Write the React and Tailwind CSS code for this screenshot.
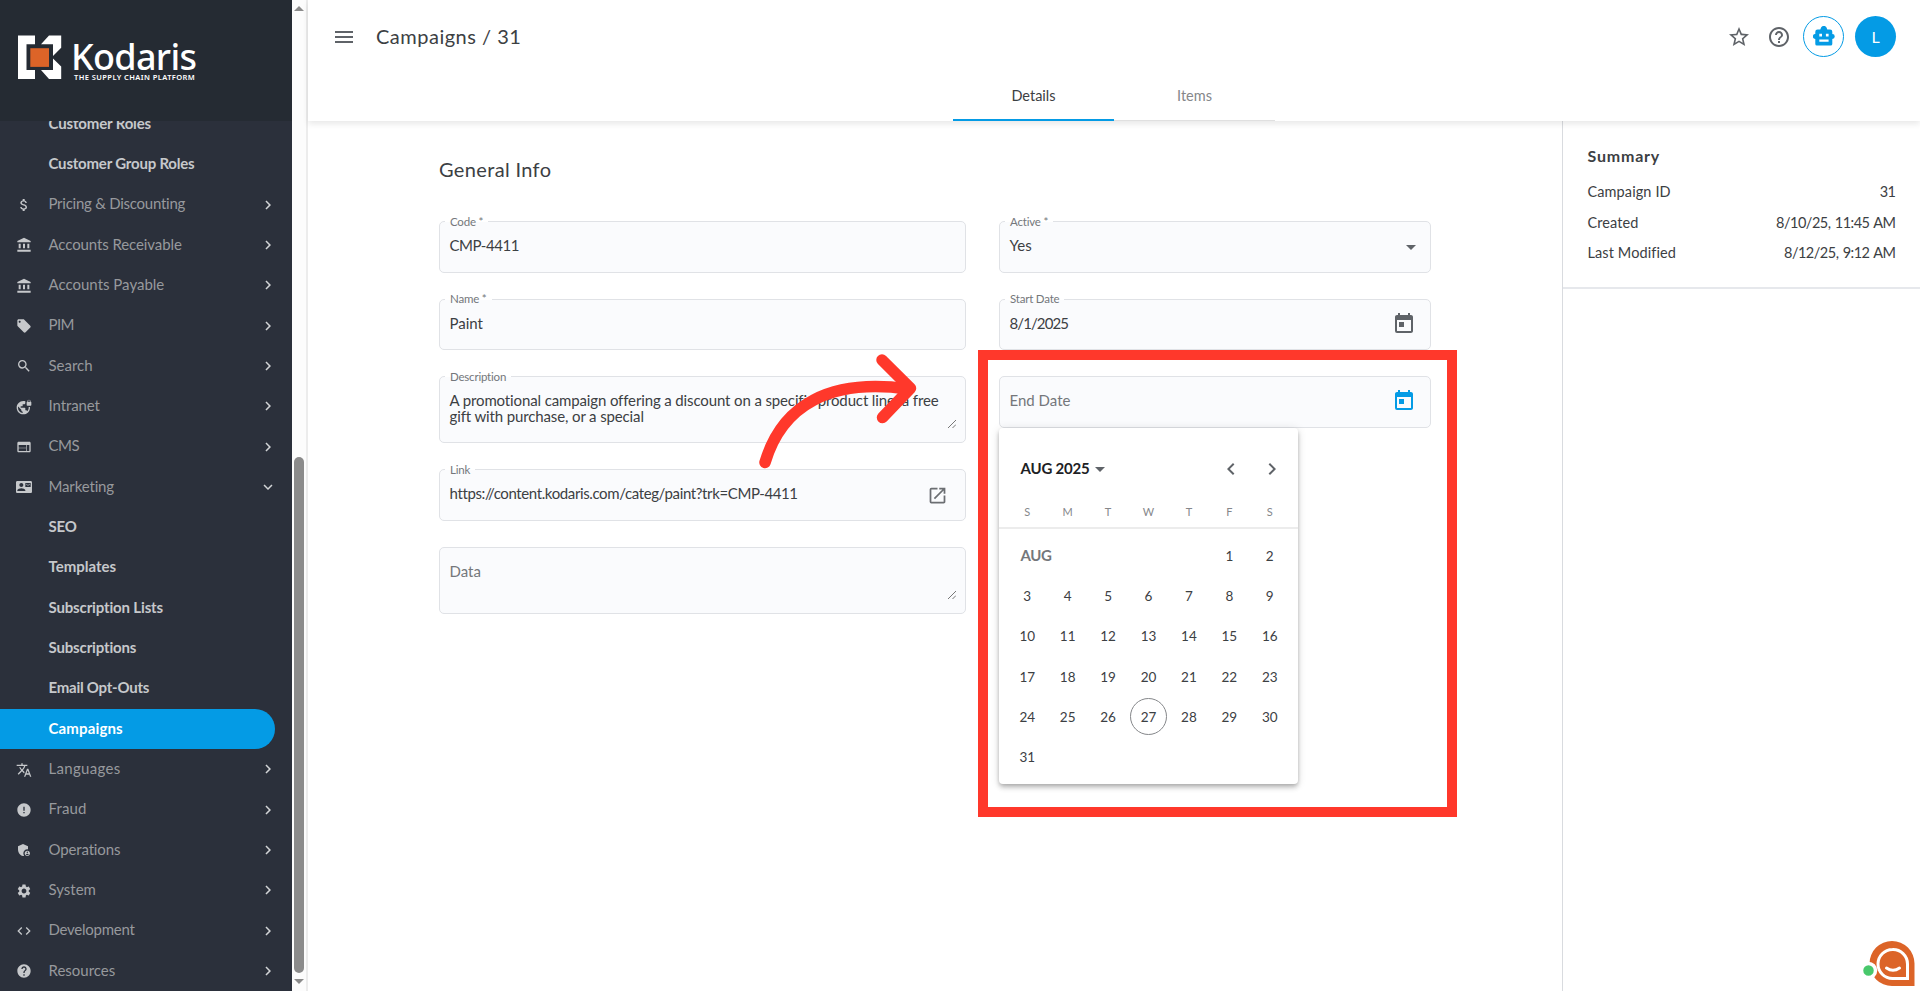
import React, { useState } from 'react';
import {
  MdAttachMoney, MdAccountBalance, MdLocalOffer, MdSearch, MdVpnLock, MdWeb, MdContactMail,
  MdTranslate, MdError, MdAdminPanelSettings, MdSettings, MdCode, MdHelp, MdChevronRight,
  MdChevronLeft, MdExpandMore, MdMenu, MdStarOutline, MdHelpOutline, MdToday,
  MdOpenInNew, MdArrowDropDown,
} from 'react-icons/md';

const menu = [
  { label: 'Customer Roles', child: true, tracking: 'tracking-[-0.15px]' },
  { label: 'Customer Group Roles', child: true, tracking: 'tracking-[-0.2px]' },
  { label: 'Pricing & Discounting', icon: MdAttachMoney, tracking: 'tracking-[-0.25px]' },
  { label: 'Accounts Receivable', icon: MdAccountBalance, tracking: 'tracking-[-0.1px]' },
  { label: 'Accounts Payable', icon: MdAccountBalance },
  { label: 'PIM', icon: MdLocalOffer, tracking: 'tracking-[-0.6px]' },
  { label: 'Search', icon: MdSearch },
  { label: 'Intranet', icon: MdVpnLock, tracking: 'tracking-[-0.1px]' },
  { label: 'CMS', icon: MdWeb, tracking: 'tracking-[-0.5px]' },
  { label: 'Marketing', icon: MdContactMail, open: true, tracking: 'tracking-[-0.15px]' },
  { label: 'SEO', child: true, tracking: 'tracking-[-0.2px]' },
  { label: 'Templates', child: true },
  { label: 'Subscription Lists', child: true, tracking: 'tracking-[-0.15px]' },
  { label: 'Subscriptions', child: true, tracking: 'tracking-[-0.15px]' },
  { label: 'Email Opt-Outs', child: true, tracking: 'tracking-[-0.25px]' },
  { label: 'Campaigns', child: true, tracking: 'tracking-[0.15px]' },
  { label: 'Languages', icon: MdTranslate, tracking: 'tracking-[0.3px]' },
  { label: 'Fraud', icon: MdError, tracking: 'tracking-[0.1px]' },
  { label: 'Operations', icon: MdAdminPanelSettings, tracking: 'tracking-[-0.15px]' },
  { label: 'System', icon: MdSettings },
  { label: 'Development', icon: MdCode, tracking: 'tracking-[-0.25px]' },
  { label: 'Resources', icon: MdHelp },
];

const summary = [
  ['Campaign ID', '31'],
  ['Created', '8/10/25, 11:45 AM'],
  ['Last Modified', '8/12/25, 9:12 AM'],
];

const days = Array.from({ length: 31 }, (_, i) => i + 1);

const Logo = () => (
  <div className="flex h-[121px] shrink-0 bg-[#252b33] pl-[18px] pt-[35px]">
    <svg width="44" height="45" viewBox="0 0 44 45">
      <path fill="#fff" d="M0 .5h17v8.800H8.500v25.700H17v9H0zM31 .5h12.200v12.300L35 21V9.300H23zM23 35h12V23.500l8.200 8v12.500H31z" />
      <path fill="#dc6428" d="M12.300 13.200H31v18.700H12.300z" />
    </svg>
    <div className="ml-[9px] whitespace-nowrap font-['Noto_Sans'] text-white">
      <div className="mt-[4px] h-[34px] text-[36px] font-medium leading-[36px] tracking-[-0.7px]">Kodaris</div>
      <div className="ml-[3px] text-[7.500px] font-semibold leading-[8px] tracking-[0.42px]">THE SUPPLY CHAIN PLATFORM</div>
    </div>
  </div>
);

const RobotIcon = () => (
  <svg width="22" height="20" viewBox="0 0 22 20">
    <path
      fill="currentColor"
      fillRule="evenodd"
      d="M8 1.800C8.400.6 9.400 0 10.800 0s2.400.6 2.800 1.800L14.300 3.500H17a2.300 2.300 0 0 1 2.300 2.300V8a2.400 2.400 0 0 1 0 4.900V18a1.600 1.600 0 0 1-1.600 1.600H3.900A1.600 1.600 0 0 1 2.300 18v-5.100a2.400 2.400 0 0 1 0-4.900V5.800a2.300 2.300 0 0 1 2.300-2.300h2.700zM6.300 7.700v2.800H9V7.700zM12.900 7.700v2.800h2.700V7.700zM6.300 13.600v2.100h9.300v-2.100z"
    />
  </svg>
);

const MenuItem = ({ item, active, onSelect }) => {
  const Icon = item.icon;
  const Arrow = item.open ? MdExpandMore : MdChevronRight;

  return (
    <button
      onClick={onSelect}
      className={`flex h-[40.330px] shrink-0 items-center text-left text-[15px] ${
        active
          ? 'w-[275px] rounded-r-full bg-[#049be5] font-bold text-white'
          : item.child
          ? 'w-full font-bold text-[#c6c8cb]'
          : 'w-full text-[#97999d]'
      }`}
    >
      <span className="flex w-[48.500px] justify-center pt-px text-base text-[#c6c8cb]">{Icon && <Icon />}</span>
      <span className={`flex-1 pb-[2px] ${item.tracking || ''}`}>{item.label}</span>
      {!item.child && <Arrow className="mr-[15px] text-[18px] text-[#d2d4d6]" />}
    </button>
  );
};

const Sidebar = () => {
  const [selected, setSelected] = useState('Campaigns');

  return (
    <aside className="flex h-full w-[291.500px] shrink-0 flex-col bg-[#2b303b]">
      <Logo />
      <nav className="flex min-h-0 flex-1 flex-col justify-end overflow-hidden">
        {menu.map((item) => (
          <MenuItem
            key={item.label}
            item={item}
            active={selected === item.label}
            onSelect={() => setSelected(item.label)}
          />
        ))}
      </nav>
    </aside>
  );
};

const Scrollbar = () => (
  <div className="flex h-full w-[16.500px] shrink-0 flex-col items-center border-r-2 border-[#ececec] bg-[#fcfcfc]">
    <svg width="10" height="5" className="mt-[6px] shrink-0"><path d="M0 5 5 0l5 5z" fill="#8b8b8b" /></svg>
    <div className="mb-[6px] mt-[446px] w-[9.500px] flex-1 rounded-full bg-[#8b8b8b]" />
    <svg width="10" height="5" className="mb-[7px] shrink-0"><path d="M0 0 5 5l5-5z" fill="#8b8b8b" /></svg>
  </div>
);

const Header = () => (
  <header className="relative z-10 flex h-[121px] shrink-0 flex-col bg-white shadow-[0_3px_6px_rgba(0,0,0,0.09)]">
    <div className="flex h-[73px] items-center px-[24px]">
      <MdMenu className="text-[24px] text-[#5f6368]" />
      <h1 className="ml-[20px] pb-[2px] text-[20px] tracking-[0.5px] text-[#3c4043]">Campaigns / 31</h1>
      <div className="ml-auto flex items-center text-[24px] text-[#5f6368]">
        <MdStarOutline className="mt-px" />
        <MdHelpOutline className="ml-4 mt-px" />
        <div className="ml-[12px] flex size-[41px] items-center justify-center rounded-full border border-[#049be5] pb-px text-[#049be5]">
          <RobotIcon />
        </div>
        <div className="ml-[11px] flex size-[41px] items-center justify-center rounded-full bg-[#049be5] text-[16px] text-white">L</div>
      </div>
    </div>
    <div className="ml-[645px] flex h-[48px] text-[14.500px]">
      <div className="flex w-[161px] items-center justify-center border-b-2 border-[#049be5] text-[#3c4043]">Details</div>
      <div className="flex w-[161px] items-center justify-center border-b border-[#e0e0e0] pb-[2px] text-[#85878a]">Items</div>
    </div>
  </header>
);

const Field = ({ label, value, valueClass = '', placeholder, area, children }) => (
  <div className={`relative flex rounded-[5px] border border-[#e0e2e6] bg-[#fafbfd] px-[9.500px] ${area ? 'h-[67px]' : 'h-[51.500px]'}`}>
    {label && (
      <div className="absolute -top-px left-[5px] flex h-px items-center bg-white px-[5px]">
        <span className="whitespace-nowrap text-[11.500px] tracking-[-0.2px] text-[#74777b]">{label}</span>
      </div>
    )}
    <div className={`w-full pt-[15px] text-[15px] leading-[16px] text-[#3c4043] ${valueClass}`}>
      {value || <span className="text-[#74777b]">{placeholder}</span>}
    </div>
    {children}
    {area && (
      <svg width="8" height="8" className="absolute bottom-[14px] right-[9px]" stroke="#777" fill="none">
        <path d="M0 8 8 0M4.500 8 8 4.500" />
      </svg>
    )}
  </div>
);

const Calendar = () => (
  <div className="absolute left-0 top-[51.500px] z-10 w-[299px] rounded-[4px] bg-white pb-[7px] shadow-[0_2px_4px_-1px_rgba(0,0,0,0.2),0_4px_5px_rgba(0,0,0,0.14),0_1px_10px_rgba(0,0,0,0.12)]">
    <div className="flex h-[78px] items-center pl-[21.500px] pr-[14px] pt-1 text-[15px] font-bold text-[#202124]">
      <span className="pb-px tracking-[-0.2px]">AUG 2025</span>
      <MdArrowDropDown className="-ml-[2px] text-[24px] text-[#5f6368]" />
      <MdChevronLeft className="ml-auto text-[24px] text-[#5f6368]" />
      <MdChevronRight className="ml-[17px] text-[24px] text-[#5f6368]" />
    </div>
    <div className="box-content grid h-[21px] grid-cols-7 border-b-2 border-[#ececec] px-[8px] text-center text-[11px] leading-none text-[#85878a]">
      {['S', 'M', 'T', 'W', 'T', 'F', 'S'].map((d, i) => (
        <span key={i}>{d}</span>
      ))}
    </div>
    <div className="grid grid-cols-7 px-[8px] pt-[7px] text-[13.500px] text-[#3c4043]">
      <div className="col-span-5 flex h-[40.330px] items-center pl-[13.500px] text-[15px] font-bold tracking-[-0.4px] text-[#74777b]">AUG</div>
      {days.map((day) => (
        <button key={day} className="flex h-[40.330px] items-center justify-center">
          <span className={day === 27 ? 'flex size-[37px] items-center justify-center rounded-full border border-[#85878a]' : ''}>
            {day}
          </span>
        </button>
      ))}
    </div>
  </div>
);

const Form = () => (
  <section className="shrink-0 pl-[131px] pt-[36px]">
    <h2 className="text-[20px] leading-[24px] tracking-[0.35px] text-[#3c4043]">General Info</h2>
    <div className="mt-[40px] flex gap-[33px]">
      <div className="flex w-[527px] shrink-0 flex-col gap-[26px]">
        <Field label="Code *" value="CMP-4411" valueClass="tracking-[-0.45px]" />
        <Field label="Name *" value="Paint" />
        <Field
          label="Description"
          area
          valueClass="tracking-[-0.13px]"
          value="A promotional campaign offering a discount on a specific product line, a free gift with purchase, or a special"
        />
        <Field label="Link" value="https://content.kodaris.com/categ/paint?trk=CMP-4411" valueClass="tracking-[-0.38px]">
          <MdOpenInNew className="mr-[8px] mt-[15px] shrink-0 text-[21px] text-[#6b6e72]" />
        </Field>
        <Field placeholder="Data" area />
      </div>
      <div className="flex w-[432px] shrink-0 flex-col gap-[26px]">
        <Field label="Active *" value="Yes">
          <MdArrowDropDown className="-mr-[2px] mt-[13px] shrink-0 text-[24px] text-[#5f6368]" />
        </Field>
        <Field label="Start Date" value="8/1/2025" valueClass="tracking-[-0.9px]">
          <MdToday className="mr-[5px] mt-[12px] shrink-0 text-[24px] text-[#5f6368]" />
        </Field>
        <div className="relative">
          <Field placeholder="End Date">
            <MdToday className="mr-[5px] mt-[12px] shrink-0 text-[24px] text-[#049be5]" />
          </Field>
          <Calendar />
        </div>
      </div>
    </div>
  </section>
);

const Summary = () => (
  <aside className="w-[358px] shrink-0 border-l border-[#d9dbdf]">
    <div className="h-[168px] border-b-2 border-[#e6e8ec] px-[24.500px] pt-[25px] text-[14.500px] text-[#3c4043]">
      <h3 className="h-[31px] text-base font-bold leading-[20px] tracking-[0.8px]">Summary</h3>
      {summary.map(([name, value]) => (
        <div key={name} className="flex h-[30.300px] items-center justify-between">
          <span className="tracking-[0.1px]">{name}</span>
          <span className="tracking-[-0.5px] [word-spacing:1px]">{value}</span>
        </div>
      ))}
    </div>
  </aside>
);

// Red frame and arrow laid over the End Date picker
const Callout = () => (
  <>
    <div className="pointer-events-none absolute left-[978px] top-[350px] z-20 h-[467px] w-[479px] border-[10px] border-[#ff382b]" />
    <svg className="pointer-events-none absolute left-[750px] top-[340px] z-20" width="180" height="140" viewBox="750 340 180 140" fill="none" stroke="#ff382b" strokeWidth="11.500" strokeLinecap="round" strokeLinejoin="round">
      <path d="M765 462.500C782 405 830 378 908 389" />
      <path d="M882 360 910.500 388.300 882.500 417.500" />
    </svg>
  </>
);

const ChatWidget = () => (
  <svg className="absolute bottom-0 right-0 z-20" width="60" height="54" viewBox="1860 937 60 54">
    <path fill="#dc6428" d="M1892 941a22.500 22.500 0 1 0 0 45h22.500v-22.500A22.500 22.500 0 0 0 1892 941z" />
    <path fill="none" stroke="#fff" strokeWidth="3" d="M1892.500 949.500a14.500 14.500 0 1 0 0 29h15v-14.500a14.500 14.500 0 0 0-15-14.500z" />
    <path fill="none" stroke="#fff" strokeWidth="3" strokeLinecap="round" d="M1886.500 968q6.500 4.500 13 0" />
    <circle cx="1868.500" cy="970.500" r="7" fill="#48c86b" stroke="#fff" strokeWidth="3.500" />
  </svg>
);

const App = () => (
  <div className="relative flex h-[991px] w-[1920px] overflow-hidden bg-white font-['Lato',sans-serif]">
    <Sidebar />
    <Scrollbar />
    <div className="flex min-w-0 flex-1 flex-col">
      <Header />
      <main className="flex min-h-0 flex-1 justify-between">
        <Form />
        <Summary />
      </main>
    </div>
    <Callout />
    <ChatWidget />
  </div>
);

export default App;
